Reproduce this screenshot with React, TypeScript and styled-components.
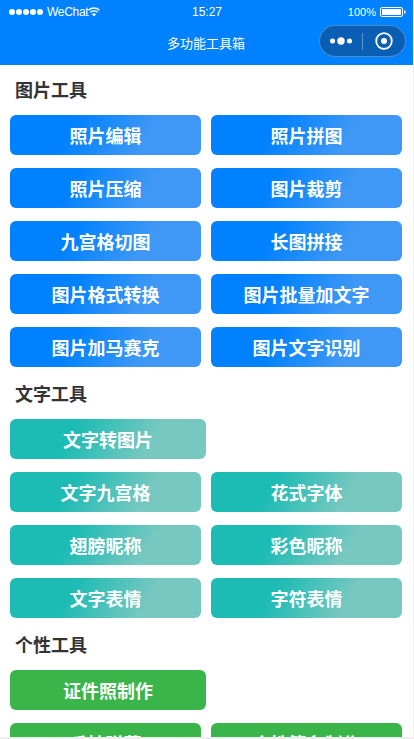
import styled, { createGlobalStyle } from "styled-components";

const GlobalStyle = createGlobalStyle`
html, body {
  margin: 0;
  padding: 0;
  background: #eeeeee;
}
* {
  box-sizing: border-box;
}
`;

const Page = styled.div`
  width: 413px;
  height: 737px;
  overflow: hidden;
  background: #fff;
  font-family: "Liberation Sans", "Noto Sans CJK SC", sans-serif;
`;

const Header = styled.div`
  height: 65px;
  padding-top: 1px;
  background: #0081ff;
  color: #fff;
`;

const StatusBar = styled.div`
  height: 22px;
  padding: 0 7px 0 8px;
  display: grid;
  grid-template-columns: 1fr auto 1fr;
  align-items: center;
  font-size: 12px;
`;

const StatusLeft = styled.div`
  display: flex;
  align-items: center;
  gap: 3px;
`;

const WeChat = styled.span`
  margin-right: -3px;
  letter-spacing: -0.3px;
`;

const StatusRight = styled.div`
  display: flex;
  align-items: center;
  justify-content: flex-end;
  gap: 4px;
  font-size: 11px;
`;

const Time = styled.div`
  font-size: 12px;
`;

const NavBar = styled.div`
  position: relative;
  height: 42px;
  padding: 0 1px 3px 0;
  display: flex;
  align-items: center;
  justify-content: center;
  font-size: 13px;
`;

const Capsule = styled.div`
  position: absolute;
  right: 7px;
  top: 2px;
  width: 87px;
  height: 32px;
  display: flex;
  align-items: center;
  border-radius: 16px;
  background: #0a5fb4;
  border: 1px solid rgba(255, 255, 255, 0.28);
`;

const CapsulePart = styled.div`
  flex: 1;
  height: 100%;
  display: flex;
  align-items: center;
  justify-content: center;
`;

const CapsuleLine = styled.div`
  width: 1px;
  height: 17px;
  background: rgba(255, 255, 255, 0.35);
`;

const Content = styled.div`
  padding: 0 11px 0 10px;
`;

const Section = styled.div`
  padding-top: 5px;
`;

const SectionTitle = styled.div`
  height: 40px;
  margin-bottom: 5px;
  padding: 0 0 2px 5px;
  display: flex;
  align-items: center;
  font-size: 18px;
  font-weight: bold;
  color: #333;
`;

const Grid = styled.div`
  display: flex;
  flex-wrap: wrap;
  gap: 13px 10px;
  margin-bottom: 2px;
`;

const Tool = styled.div<{ $from: string; $to: string; $wide?: boolean }>`
  width: ${(p) => (p.$wide ? "196px" : "191px")};
  height: 40px;
  flex: none;
  display: flex;
  align-items: center;
  justify-content: center;
  border-radius: 6px;
  color: #fff;
  font-size: 18px;
  font-weight: bold;
  background: linear-gradient(120deg, ${(p) => p.$from} 32%, ${(p) => p.$to} 70%);
`;

const blue = { from: "#0081ff", to: "#3f98f5" };
const teal = { from: "#1cbbb4", to: "#76c8c0" };
const green = { from: "#39b54a", to: "#39b54a" };

const sections = [
  {
    title: "图片工具",
    color: blue,
    items: ["照片编辑", "照片拼图", "照片压缩", "图片裁剪", "九宫格切图", "长图拼接", "图片格式转换", "图片批量加文字", "图片加马赛克", "图片文字识别"],
  },
  {
    title: "文字工具",
    color: teal,
    wide: "文字转图片",
    items: ["文字九宫格", "花式字体", "翅膀昵称", "彩色昵称", "文字表情", "字符表情"],
  },
  {
    title: "个性工具",
    color: green,
    wide: "证件照制作",
    items: ["手持弹幕", "个性签名制作"],
  },
];

const Signal = () => (
  <svg width="36" height="8" viewBox="0 0 36 8">
    {[4, 11, 18, 25, 32].map((x) => (
      <circle key={x} cx={x} cy="4" r="3" fill="#fff" />
    ))}
  </svg>
);

const Wifi = () => (
  <svg width="12" height="10" viewBox="0 0 12 10" fill="none" stroke="#fff">
    <path d="M0.5 3.2C3.6 0.4 8.4 0.4 11.5 3.2" strokeWidth="1.5" />
    <path d="M2.4 5.3C4.4 3.6 7.6 3.6 9.6 5.3" strokeWidth="1.5" />
    <path d="M4.2 7.3C5.3 6.5 6.7 6.5 7.8 7.3L6 9Z" fill="#fff" strokeWidth="0.8" />
  </svg>
);

const Battery = () => (
  <svg width="26" height="10" viewBox="0 0 26 10">
    <rect x="0.5" y="0.5" width="22" height="9" rx="1.5" fill="none" stroke="#fff" />
    <rect x="2" y="2" width="19" height="6" fill="#fff" />
    <rect x="24" y="3.5" width="1.5" height="3" fill="#fff" />
  </svg>
);

const MoreDots = () => (
  <svg width="24" height="10" viewBox="0 0 24 10">
    <circle cx="3.5" cy="5" r="2.5" fill="#fff" />
    <circle cx="12" cy="5" r="3.7" fill="#fff" />
    <circle cx="20.5" cy="5" r="2.5" fill="#fff" />
  </svg>
);

const Target = () => (
  <svg width="18" height="18" viewBox="0 0 18 18">
    <circle cx="9" cy="9" r="7.8" fill="none" stroke="#fff" strokeWidth="1.8" />
    <circle cx="9" cy="9" r="3" fill="#fff" />
  </svg>
);

const App = () => {
  return (
    <Page>
      <GlobalStyle />
      <Header>
        <StatusBar>
          <StatusLeft>
            <Signal />
            <WeChat>WeChat</WeChat>
            <Wifi />
          </StatusLeft>
          <Time>15:27</Time>
          <StatusRight>
            <span>100%</span>
            <Battery />
          </StatusRight>
        </StatusBar>
        <NavBar>
          多功能工具箱
          <Capsule>
            <CapsulePart>
              <MoreDots />
            </CapsulePart>
            <CapsuleLine />
            <CapsulePart>
              <Target />
            </CapsulePart>
          </Capsule>
        </NavBar>
      </Header>
      <Content>
        {sections.map((s) => (
          <Section key={s.title}>
            <SectionTitle>{s.title}</SectionTitle>
            <Grid>
              {s.wide && (
                <Tool $wide $from={s.color.from} $to={s.color.to}>
                  {s.wide}
                </Tool>
              )}
              {s.items.map((t) => (
                <Tool key={t} $from={s.color.from} $to={s.color.to}>
                  {t}
                </Tool>
              ))}
            </Grid>
          </Section>
        ))}
      </Content>
    </Page>
  );
};

export default App;
